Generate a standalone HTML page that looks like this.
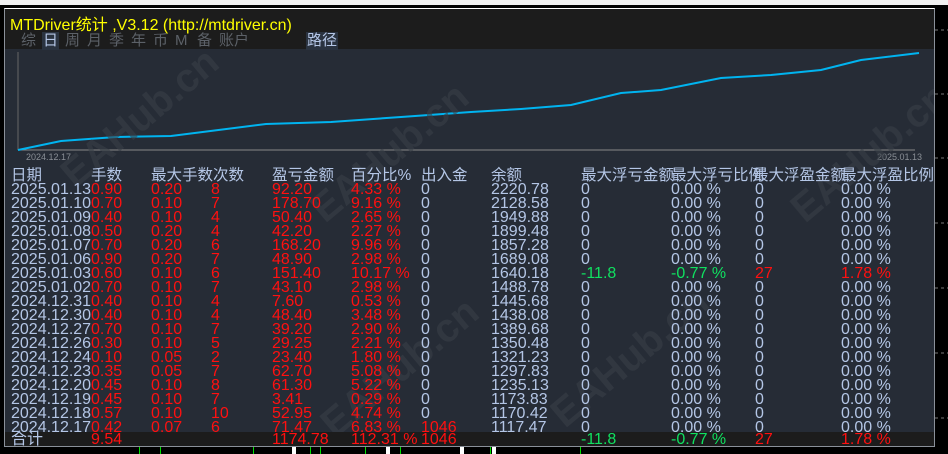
<!DOCTYPE html>
<html><head><meta charset="utf-8"><style>
*{margin:0;padding:0;box-sizing:border-box}
body{width:948px;height:454px;background:#000;overflow:hidden;position:relative;font-family:"Liberation Sans","Noto Sans CJK SC",sans-serif}
.a{position:absolute;white-space:nowrap}
pre.a{white-space:pre}
#top{left:0;top:0;width:948px;height:5px;background:#f0f0f0}
#panel{left:4px;top:8px;width:931px;height:439px;border:1px solid #8a9099;border-top:1px solid #fff;background:#262c36;overflow:hidden}
#hdr{left:0;top:0;width:931px;height:40px;background:#1c1c1c}
.t{font-size:16px;line-height:14px;color:#b4c6e6;letter-spacing:0}
.r{color:#ff1010}.g{color:#10e060}
.h{font-size:15.5px;line-height:16px;color:#b4c6e6}
.tb{position:absolute;top:23px;font-size:15px;line-height:18px;color:#5c6168}
#tot{left:0;top:423px;width:931px;height:15px;background:#1c1c1c}
</style></head><body>
<div class="a" id="top"></div>
<div class="a" id="panel">
<div class="a" id="hdr"></div>
<div class="a" style="left:5px;top:2px;font-size:16px;color:#ffff00">MTDriver统计 ,V3.12 (http://mtdriver.cn)</div>
<span class="tb" style="left:16px">综</span>
<span class="tb" style="left:37px;background:#2a3340;color:#b4c6e6;padding:0 1px">日</span>
<span class="tb" style="left:60px">周</span>
<span class="tb" style="left:82px">月</span>
<span class="tb" style="left:104px">季</span>
<span class="tb" style="left:126px">年</span>
<span class="tb" style="left:148px">币</span>
<span class="tb" style="left:170px">M</span>
<span class="tb" style="left:192px">备</span>
<span class="tb" style="left:214px">账户</span>
<span class="tb" style="left:301px;color:#b4c6e6;background:#2a3340;padding:0 1px">路径</span>
<svg class="a" style="left:0;top:0" width="931" height="438">
<line x1="13" y1="43" x2="13" y2="141" stroke="#666" stroke-width="1"/>
<line x1="13" y1="141" x2="910" y2="141" stroke="#888" stroke-width="1"/>
<polyline fill="none" stroke="#00b4f0" stroke-width="2" points="13,141 56,132 111,128 166,127 261,115 326,113 396,108 466,103 516,100 566,96 616,84 656,81 716,69 766,66 816,61 856,51 914,44"/>
<text x="21" y="151" font-size="9" fill="#8a8f96" font-family="Liberation Sans">2024.12.17</text>
<text x="872" y="151" font-size="9" fill="#8a8f96" font-family="Liberation Sans">2025.01.13</text>
<g fill="#3a4049" font-family="Liberation Sans" font-weight="bold" font-size="40" opacity="0.6">
<text transform="translate(70,180) rotate(-40)">EAHub.cn</text>
<text transform="translate(320,215) rotate(-40)">EAHub.cn</text>
<text transform="translate(560,420) rotate(-40)">EAHub.cn</text>
<text transform="translate(800,215) rotate(-40)">EAHub.cn</text>
<text transform="translate(330,430) rotate(-40)">EAHub.cn</text>
</g>
</svg>
<div class="a h" style="left:6px;top:159px">日期</div><div class="a h" style="left:86px;top:159px">手数</div><div class="a h" style="left:146px;top:159px">最大手数次数</div><div class="a h" style="left:267px;top:159px">盈亏金额</div><div class="a h" style="left:346px;top:159px">百分比%</div><div class="a h" style="left:416px;top:159px">出入金</div><div class="a h" style="left:486px;top:159px">余额</div><div class="a h" style="left:576px;top:159px">最大浮亏金额</div><div class="a h" style="left:666px;top:159px">最大浮亏比例</div><div class="a h" style="left:748px;top:159px">最大浮盈金额</div><div class="a h" style="left:836px;top:159px">最大浮盈比例</div>
<div class="a" style="left:0;top:174px;width:931px;height:249px;overflow:hidden">
<pre class="a t" style="left:6px;top:0;font-family:inherit">2025.01.13
2025.01.10
2025.01.09
2025.01.08
2025.01.07
2025.01.06
2025.01.03
2025.01.02
2024.12.31
2024.12.30
2024.12.27
2024.12.26
2024.12.24
2024.12.23
2024.12.20
2024.12.19
2024.12.18
2024.12.17</pre>
<pre class="a t r" style="left:86px;top:0;font-family:inherit">0.90
0.70
0.40
0.50
0.70
0.90
0.60
0.70
0.40
0.40
0.70
0.30
0.10
0.35
0.45
0.45
0.57
0.42</pre>
<pre class="a t r" style="left:146px;top:0;font-family:inherit">0.20
0.10
0.10
0.20
0.20
0.20
0.10
0.10
0.10
0.10
0.10
0.10
0.05
0.05
0.10
0.10
0.10
0.07</pre>
<pre class="a t r" style="left:206px;top:0;font-family:inherit">8
7
4
4
6
7
6
7
4
4
7
5
2
7
8
7
10
6</pre>
<pre class="a t r" style="left:267px;top:0;font-family:inherit">92.20
178.70
50.40
42.20
168.20
48.90
151.40
43.10
7.60
48.40
39.20
29.25
23.40
62.70
61.30
3.41
52.95
71.47</pre>
<pre class="a t r" style="left:346px;top:0;font-family:inherit">4.33 %
9.16 %
2.65 %
2.27 %
9.96 %
2.98 %
10.17 %
2.98 %
0.53 %
3.48 %
2.90 %
2.21 %
1.80 %
5.08 %
5.22 %
0.29 %
4.74 %
6.83 %</pre>
<pre class="a t" style="left:416px;top:0;font-family:inherit">0
0
0
0
0
0
0
0
0
0
0
0
0
0
0
0
0
<span class="r">1046</span></pre>
<pre class="a t" style="left:486px;top:0;font-family:inherit">2220.78
2128.58
1949.88
1899.48
1857.28
1689.08
1640.18
1488.78
1445.68
1438.08
1389.68
1350.48
1321.23
1297.83
1235.13
1173.83
1170.42
1117.47</pre>
<pre class="a t" style="left:576px;top:0;font-family:inherit">0
0
0
0
0
0
<span class="g">-11.8</span>
0
0
0
0
0
0
0
0
0
0
0</pre>
<pre class="a t" style="left:666px;top:0;font-family:inherit">0.00 %
0.00 %
0.00 %
0.00 %
0.00 %
0.00 %
<span class="g">-0.77 %</span>
0.00 %
0.00 %
0.00 %
0.00 %
0.00 %
0.00 %
0.00 %
0.00 %
0.00 %
0.00 %
0.00 %</pre>
<pre class="a t" style="left:750px;top:0;font-family:inherit">0
0
0
0
0
0
<span class="r">27</span>
0
0
0
0
0
0
0
0
0
0
0</pre>
<pre class="a t" style="left:836px;top:0;font-family:inherit">0.00 %
0.00 %
0.00 %
0.00 %
0.00 %
0.00 %
<span class="r">1.78 %</span>
0.00 %
0.00 %
0.00 %
0.00 %
0.00 %
0.00 %
0.00 %
0.00 %
0.00 %
0.00 %
0.00 %</pre>
</div>
<div class="a" id="tot"></div>
<div class="a t" style="left:6px;top:424px">合计</div>
<div class="a t r" style="left:86px;top:424px">9.54</div>
<div class="a t r" style="left:267px;top:424px">1174.78</div>
<div class="a t r" style="left:346px;top:424px">112.31 %</div>
<div class="a t r" style="left:416px;top:424px">1046</div>
<div class="a t g" style="left:576px;top:424px">-11.8</div>
<div class="a t g" style="left:666px;top:424px">-0.77 %</div>
<div class="a t r" style="left:750px;top:424px">27</div>
<div class="a t r" style="left:836px;top:424px">1.78 %</div>
</div>
<svg class="a" style="left:0;top:447px" width="948" height="7">
<g fill="#00e000"><rect x="139" y="0" width="1" height="7"/><rect x="160" y="0" width="1" height="7"/><rect x="253" y="0" width="1" height="7"/><rect x="310" y="0" width="1" height="7"/><rect x="320" y="0" width="1" height="7"/><rect x="365" y="0" width="1" height="7"/><rect x="400" y="0" width="1" height="7"/><rect x="490" y="0" width="1" height="7"/><rect x="580" y="0" width="1" height="7"/></g>
<g fill="#fff"><rect x="292" y="0" width="4" height="7"/><rect x="386" y="0" width="4" height="7"/><rect x="460" y="0" width="4" height="7"/><rect x="492" y="0" width="4" height="7"/></g>
</svg>
<svg class="a" style="left:935px;top:8px" width="13" height="440">
<g stroke="#777" stroke-dasharray="3,3"><line x1="0" y1="22" x2="13" y2="22"/><line x1="0" y1="86" x2="13" y2="86"/><line x1="0" y1="150" x2="13" y2="150"/><line x1="0" y1="215" x2="13" y2="215"/><line x1="0" y1="280" x2="13" y2="280"/><line x1="0" y1="345" x2="13" y2="345"/><line x1="0" y1="410" x2="13" y2="410"/></g>
</svg>
</body></html>
